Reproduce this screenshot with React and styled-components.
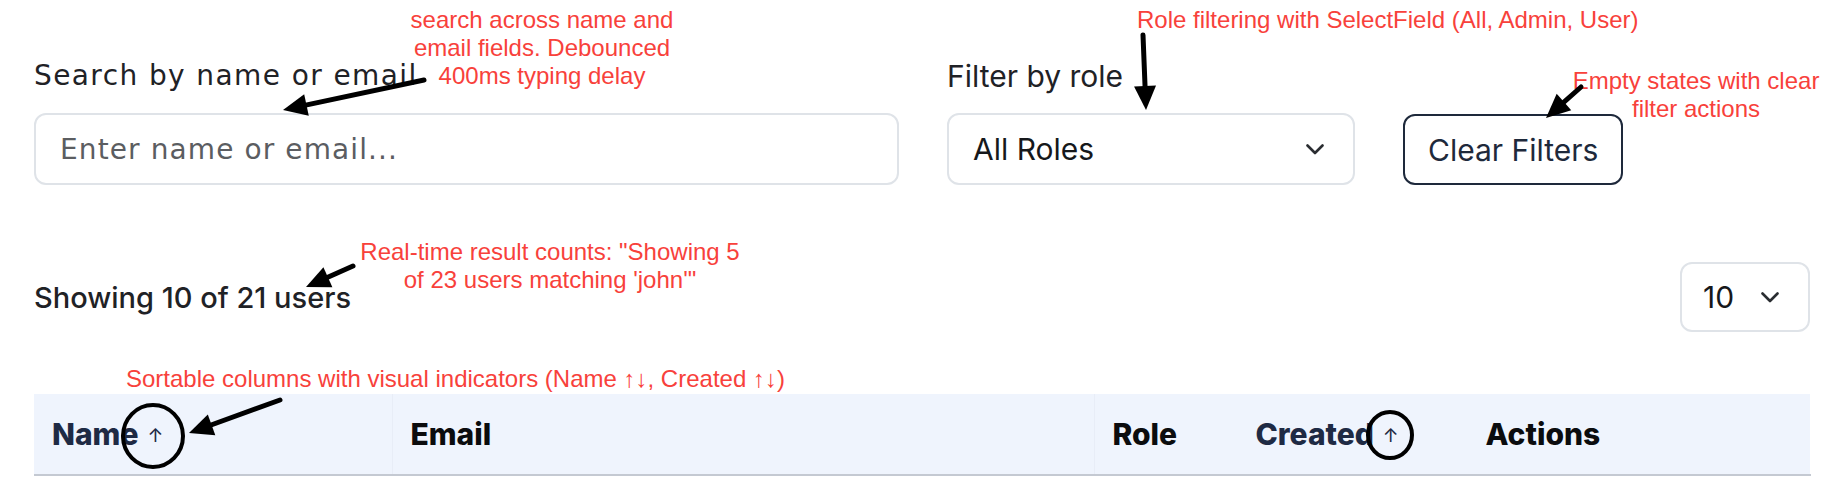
import React from 'react';
import styled, { createGlobalStyle } from 'styled-components';

const GlobalStyle = createGlobalStyle`
  html, body {
    margin: 0;
    padding: 0;
    background: #ffffff;
  }
  body {
    font-family: Inter, "Noto Sans", sans-serif;
    color: #1f2226;
  }
`;

const Page = styled.div`
  position: relative;
  width: 1846px;
  height: 480px;
  box-sizing: border-box;
  padding: 59px 36px 0 34px;
  overflow: hidden;
`;

const FilterRow = styled.div`
  display: flex;
  align-items: flex-end;
  gap: 48px;
`;

const Field = styled.div`
  display: flex;
  flex-direction: column;
  gap: 20px;
  width: ${(p) => p.$width}px;
`;

const Label = styled.label`
  font-family: ${(p) => (p.$wide ? '"DejaVu Sans", Inter, sans-serif' : 'Inter, "Noto Sans", sans-serif')};
  font-size: ${(p) => (p.$wide ? 28 : 30)}px;
  letter-spacing: ${(p) => (p.$wide ? '1.4px' : 'normal')};
  line-height: 34px;
  font-weight: 400;
  color: #1f2226;
`;

const SearchInput = styled.input`
  box-sizing: border-box;
  width: 100%;
  height: 72px;
  padding: 0 24px;
  border: 2px solid #dfe3e8;
  border-radius: 12px;
  font-family: "DejaVu Sans", Inter, sans-serif;
  font-size: 28px;
  letter-spacing: 1.1px;
  color: #1f2226;
  outline: none;
  background: #fff;

  &::placeholder {
    color: #5b5d61;
  }
`;

const SelectBox = styled.div`
  box-sizing: border-box;
  display: flex;
  align-items: center;
  justify-content: space-between;
  height: ${(p) => p.$height || 72}px;
  width: ${(p) => (p.$width ? `${p.$width}px` : '100%')};
  padding: 0 29px 0 ${(p) => p.$padLeft || 24}px;
  border: 2px solid #dfe3e8;
  border-radius: 12px;
  background: #fff;
  font-size: 30px;
  color: #16181b;
  cursor: pointer;
`;

const ClearButton = styled.button`
  box-sizing: border-box;
  height: 71px;
  padding: 0 23px;
  border: 2px solid #1e293b;
  border-radius: 12px;
  background: #fff;
  font-family: Inter, "Noto Sans", sans-serif;
  font-size: 30px;
  font-weight: 400;
  color: #1e293b;
  cursor: pointer;
`;

const CountRow = styled.div`
  display: flex;
  align-items: center;
  justify-content: space-between;
  margin-top: 77px;
`;

const CountText = styled.div`
  font-size: 29px;
  font-weight: 500;
  color: #1f2226;
`;

const Table = styled.table`
  margin-top: 62px;
  width: 1776px;
  border-collapse: collapse;
  table-layout: fixed;
`;

const HeadCell = styled.th`
  height: 80px;
  padding: 0 0 0 18px;
  text-align: left;
  background: #eff4fd;
  border-bottom: 2px solid #c4c9d2;
  border-right: 1px solid ${(p) => (p.$divider ? '#e8edf7' : 'transparent')};
  font-size: 30px;
  font-weight: 800;
  color: ${(p) => (p.$active ? '#1e2a44' : '#0b0c0e')};
  white-space: nowrap;
`;

const SortArrow = styled.span`
  margin-left: 9px;
  font-size: 19px;
  font-weight: 400;
  color: #1e2a44;
  vertical-align: 3px;
`;

const Note = styled.div`
  position: absolute;
  top: ${(p) => p.$top}px;
  left: ${(p) => p.$left}px;
  transform: ${(p) => (p.$center ? 'translateX(-50%)' : 'none')};
  text-align: ${(p) => (p.$center ? 'center' : 'left')};
  font-family: "Liberation Sans", Arial, sans-serif;
  font-size: 24px;
  line-height: 28px;
  color: #f8413b;
  white-space: nowrap;
  pointer-events: none;
`;

const Marks = styled.svg`
  position: absolute;
  top: 0;
  left: 0;
  pointer-events: none;
`;

const Chevron = () => (
  <svg width="18" height="11" viewBox="0 0 18 11" fill="none">
    <path d="M1.5 1.5 L9 9 L16.5 1.5" stroke="#2a2d31" strokeWidth="2.6" strokeLinecap="round" strokeLinejoin="round" />
  </svg>
);

const Arrow = ({ x1, y1, x2, y2 }) => {
  const dx = x2 - x1;
  const dy = y2 - y1;
  const len = Math.hypot(dx, dy);
  const ux = dx / len;
  const uy = dy / len;
  const headLen = 24;
  const headHalf = 11;
  const bx = x2 - ux * headLen;
  const by = y2 - uy * headLen;
  const pts = [
    `${x2},${y2}`,
    `${bx - uy * headHalf},${by + ux * headHalf}`,
    `${bx + uy * headHalf},${by - ux * headHalf}`,
  ].join(' ');
  return (
    <g>
      <line x1={x1} y1={y1} x2={bx + ux * 2} y2={by + uy * 2} stroke="#000" strokeWidth="5" strokeLinecap="round" />
      <polygon points={pts} fill="#000" />
    </g>
  );
};

const columns = [
  { label: 'Name', width: 358, sort: true, divider: true },
  { label: 'Email', width: 702, divider: true },
  { label: 'Role', width: 143 },
  { label: 'Created', width: 230, sort: true },
  { label: 'Actions', width: 343 },
];

export default function App() {
  return (
    <Page>
      <GlobalStyle />
      <FilterRow>
        <Field $width={865}>
          <Label $wide>Search by name or email</Label>
          <SearchInput placeholder="Enter name or email..." />
        </Field>
        <Field $width={408}>
          <Label>Filter by role</Label>
          <SelectBox>
            <span>All Roles</span>
            <Chevron />
          </SelectBox>
        </Field>
        <ClearButton>Clear Filters</ClearButton>
      </FilterRow>

      <CountRow>
        <CountText>Showing 10 of 21 users</CountText>
        <SelectBox $width={130} $height={70} $padLeft={21}>
          <span>10</span>
          <Chevron />
        </SelectBox>
      </CountRow>

      <Table>
        <colgroup>
          {columns.map((c) => (
            <col key={c.label} style={{ width: c.width }} />
          ))}
        </colgroup>
        <thead>
          <tr>
            {columns.map((c) => (
              <HeadCell key={c.label} $active={c.sort} $divider={c.divider}>
                {c.label}
                {c.sort && <SortArrow>↑</SortArrow>}
              </HeadCell>
            ))}
          </tr>
        </thead>
      </Table>

      <Note $top={6} $left={542} $center>
        search across name and
        <br />
        email fields. Debounced
        <br />
        400ms typing delay
      </Note>
      <Note $top={6} $left={1137}>
        Role filtering with SelectField (All, Admin, User)
      </Note>
      <Note $top={67} $left={1696} $center>
        Empty states with clear
        <br />
        filter actions
      </Note>
      <Note $top={238} $left={550} $center>
        Real-time result counts: "Showing 5
        <br />
        of 23 users matching 'john'"
      </Note>
      <Note $top={365} $left={126}>
        Sortable columns with visual indicators (Name ↑↓, Created ↑↓)
      </Note>

      <Marks width="1846" height="480" viewBox="0 0 1846 480">
        <Arrow x1={424} y1={80} x2={283} y2={110} />
        <Arrow x1={1143} y1={35} x2={1146} y2={110} />
        <Arrow x1={1581} y1={87} x2={1546} y2={118} />
        <Arrow x1={353} y1={266} x2={306} y2={287} />
        <Arrow x1={280} y1={400} x2={189} y2={433} />
        <ellipse cx="153" cy="436" rx="30" ry="31" fill="none" stroke="#000" strokeWidth="4" />
        <ellipse cx="1390" cy="435" rx="22" ry="23" fill="none" stroke="#000" strokeWidth="4" />
      </Marks>
    </Page>
  );
}
